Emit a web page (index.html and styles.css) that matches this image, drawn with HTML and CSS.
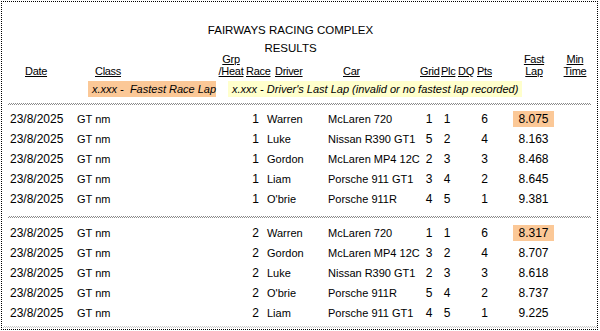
FILE: index.html
```html
<!DOCTYPE html>
<html>
<head>
<meta charset="utf-8">
<link rel="stylesheet" href="styles.css">
</head>
<body>
<div class="page">
  <div class="title">FAIRWAYS RACING COMPLEX<br>RESULTS</div>
  <div class="head">
    <span class="ul">Date</span>
    <span class="ul">Class</span>
    <span class="ul c">Grp<br>/Heat</span>
    <span class="ul">Race</span>
    <span class="ul">Driver</span>
    <span class="ul">Car</span>
    <span class="ul">Grid</span>
    <span class="ul">Plc</span>
    <span class="ul">DQ</span>
    <span class="ul">Pts</span>
    <span class="ul c">Fast<br>Lap</span>
    <span class="ul c">Min<br>Time</span>
  </div>
  <div class="legend">
    <span class="lg lg-fast">x.xxx -&nbsp; Fastest Race Lap</span>
    <span class="lg lg-last">x.xxx - Driver's Last Lap (invalid or no fastest lap recorded)</span>
  </div>
  <div class="sep"></div>
  <div class="group g1">
    <div class="row"><span class="num">23/8/2025</span><span>GT nm</span><span class="num r">1</span><span class="drv">Warren</span><span>McLaren 720</span><span class="num c">1</span><span class="num c">1</span><span></span><span class="num c">6</span><span></span><span class="num c fast best">8.075</span><span></span></div>
    <div class="row"><span class="num">23/8/2025</span><span>GT nm</span><span class="num r">1</span><span class="drv">Luke</span><span>Nissan R390 GT1</span><span class="num c">5</span><span class="num c">2</span><span></span><span class="num c">4</span><span></span><span class="num c fast">8.163</span><span></span></div>
    <div class="row"><span class="num">23/8/2025</span><span>GT nm</span><span class="num r">1</span><span class="drv">Gordon</span><span>McLaren MP4 12C</span><span class="num c">2</span><span class="num c">3</span><span></span><span class="num c">3</span><span></span><span class="num c fast">8.468</span><span></span></div>
    <div class="row"><span class="num">23/8/2025</span><span>GT nm</span><span class="num r">1</span><span class="drv">Liam</span><span>Porsche 911 GT1</span><span class="num c">3</span><span class="num c">4</span><span></span><span class="num c">2</span><span></span><span class="num c fast">8.645</span><span></span></div>
    <div class="row"><span class="num">23/8/2025</span><span>GT nm</span><span class="num r">1</span><span class="drv">O'brie</span><span>Porsche 911R</span><span class="num c">4</span><span class="num c">5</span><span></span><span class="num c">1</span><span></span><span class="num c fast">9.381</span><span></span></div>
  </div>
  <div class="sep s2"></div>
  <div class="group g2">
    <div class="row"><span class="num">23/8/2025</span><span>GT nm</span><span class="num r">2</span><span class="drv">Warren</span><span>McLaren 720</span><span class="num c">1</span><span class="num c">1</span><span></span><span class="num c">6</span><span></span><span class="num c fast best">8.317</span><span></span></div>
    <div class="row"><span class="num">23/8/2025</span><span>GT nm</span><span class="num r">2</span><span class="drv">Gordon</span><span>McLaren MP4 12C</span><span class="num c">3</span><span class="num c">2</span><span></span><span class="num c">4</span><span></span><span class="num c fast">8.707</span><span></span></div>
    <div class="row"><span class="num">23/8/2025</span><span>GT nm</span><span class="num r">2</span><span class="drv">Luke</span><span>Nissan R390 GT1</span><span class="num c">2</span><span class="num c">3</span><span></span><span class="num c">3</span><span></span><span class="num c fast">8.618</span><span></span></div>
    <div class="row"><span class="num">23/8/2025</span><span>GT nm</span><span class="num r">2</span><span class="drv">O'brie</span><span>Porsche 911R</span><span class="num c">5</span><span class="num c">4</span><span></span><span class="num c">2</span><span></span><span class="num c fast">8.737</span><span></span></div>
    <div class="row"><span class="num">23/8/2025</span><span>GT nm</span><span class="num r">2</span><span class="drv">Liam</span><span>Porsche 911 GT1</span><span class="num c">4</span><span class="num c">5</span><span></span><span class="num c">1</span><span></span><span class="num c fast">9.225</span><span></span></div>
  </div>
  <div class="sep s3"></div>
</div>
</body>
</html>
```

FILE: styles.css
```css
html, body {
  margin: 0;
  padding: 0;
  background: #fff;
}
body {
  font-family: "Liberation Sans", Arial, sans-serif;
  font-size: 11px;
  color: #000;
}
.page {
  box-sizing: border-box;
  width: 597px;
  height: 329px;
  margin: 1px 2px 0 1px;
  border: 1px dotted #000;
  padding: 0 6px;
  overflow: hidden;
}
.title {
  padding-top: 19px;
  padding-right: 18px;
  line-height: 18px;
  text-align: center;
  font-size: 11.5px;
}
.head {
  margin-top: -4px;
  padding-left: 17px;
  display: grid;
  grid-template-columns: 70px 121px 30px 29px 68px 77px 21px 17px 19px 35px 44px 38px;
  align-items: end;
  line-height: 12px;
  height: 24px;
  letter-spacing: -0.3px;
}
.ul {
  text-decoration: underline;
  white-space: nowrap;
}
.c {
  text-align: center;
}
.r {
  text-align: right;
}
.legend {
  margin-top: 4px;
  padding-left: 80px;
  display: flex;
  gap: 12px;
  height: 16px;
}
.lg {
  font-style: italic;
  line-height: 16px;
  padding-left: 4px;
  box-sizing: border-box;
  white-space: nowrap;
}
.lg-fast {
  width: 128px;
  background: #fbc897;
}
.lg-last {
  width: 294px;
  background: #ffffcc;
}
.sep {
  height: 2px;
  margin-top: 6px;
  background: repeating-conic-gradient(#8c8c8c 0 25%, #ffffff 0 50%) 0 0 / 2px 2px;
}
.sep.s2 {
  margin-top: 7px;
}
.sep.s3 {
  margin-top: 3px;
  margin-left: -5px;
  margin-right: -6px;
  background: repeating-conic-gradient(#c8c8c8 0 25%, #ffffff 0 50%) 0 0 / 2px 2px;
}
.group.g1 {
  margin-top: 4px;
}
.group.g2 {
  margin-top: 5px;
}
.row {
  display: grid;
  grid-template-columns: 67px 163px 19px 69px 92px 18px 18px 18px 21px 18px 41px 36px;
  padding-left: 2px;
  height: 20px;
  line-height: 20px;
  white-space: nowrap;
}
.num {
  font-size: 12px;
}
.drv {
  padding-left: 8px;
}
.fast {
  line-height: 16px;
  margin: 2px 0;
}
.best {
  background: #fbc897;
}
```
